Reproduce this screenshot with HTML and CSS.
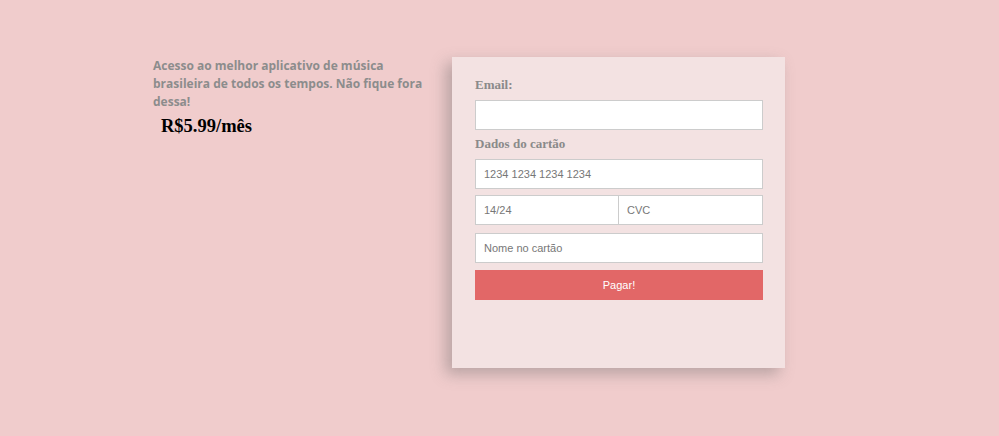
FILE: index.html
```html
<!DOCTYPE html>
<html lang="pt-BR">
<head>
<meta charset="utf-8">
<title>Assinatura</title>
<link rel="stylesheet" href="styles.css">
</head>
<body>
<main class="page">
  <section class="intro">
    <p class="pitch">Acesso ao melhor aplicativo de música brasileira de todos os tempos. Não fique fora dessa!</p>
    <p class="price">R$5.99/mês</p>
  </section>
  <form class="card">
    <label class="label">Email:</label>
    <input class="field" type="email">
    <label class="label label-card">Dados do cartão</label>
    <input class="field" type="text" placeholder="1234 1234 1234 1234">
    <div class="row">
      <input class="field half" type="text" placeholder="14/24">
      <input class="field half right" type="text" placeholder="CVC">
    </div>
    <input class="field" type="text" placeholder="Nome no cartão">
    <button class="pay" type="button">Pagar!</button>
  </form>
</main>
</body>
</html>
```
FILE: styles.css
```css
html, body {
  margin: 0;
  background: #f0cccc;
}
.page {
  display: flex;
  align-items: flex-start;
  min-height: 436px;
  box-sizing: border-box;
  padding: 57px 0 0 153px;
}
.intro {
  width: 270px;
  margin-right: 29px;
}
.pitch {
  margin: 0;
  font-family: "Open Sans", sans-serif;
  font-weight: 700;
  font-size: 12px;
  line-height: 18px;
  color: #8c8c8c;
}
.price {
  margin: 4px 0 0 8px;
  font-family: "Liberation Serif", serif;
  font-weight: 700;
  font-size: 18.5px;
  line-height: 22px;
  color: #000;
}
.card {
  width: 333px;
  height: 311px;
  box-sizing: border-box;
  padding: 20px 22px 0 23px;
  background: #f3e2e2;
  box-shadow: -6px 6px 14px rgba(100, 100, 100, 0.4);
  display: flex;
  flex-direction: column;
}
.label {
  font-family: "Liberation Serif", serif;
  font-weight: 700;
  font-size: 13px;
  line-height: 16px;
  color: #8a8a8a;
  margin-bottom: 7px;
}
.label-card {
  margin-top: 0;
  margin-bottom: 7px;
}
.field {
  display: block;
  width: 288px;
  height: 30px;
  box-sizing: border-box;
  margin: 0 0 6px 0;
  padding: 0 8px;
  border: 1px solid #cccccc;
  background: #fff;
  font-family: "Liberation Sans", sans-serif;
  font-size: 11px;
  color: #555;
  outline: none;
}
.field::placeholder {
  color: #777;
}
.row {
  display: flex;
  margin-bottom: 2px;
}
.half {
  width: 144px;
}
.right {
  border-left: none;
}
.pay {
  width: 288px;
  height: 30px;
  margin-top: 1px;
  border: none;
  background: #e26767;
  color: #fff;
  font-family: "Liberation Sans", sans-serif;
  font-size: 11px;
}
```
